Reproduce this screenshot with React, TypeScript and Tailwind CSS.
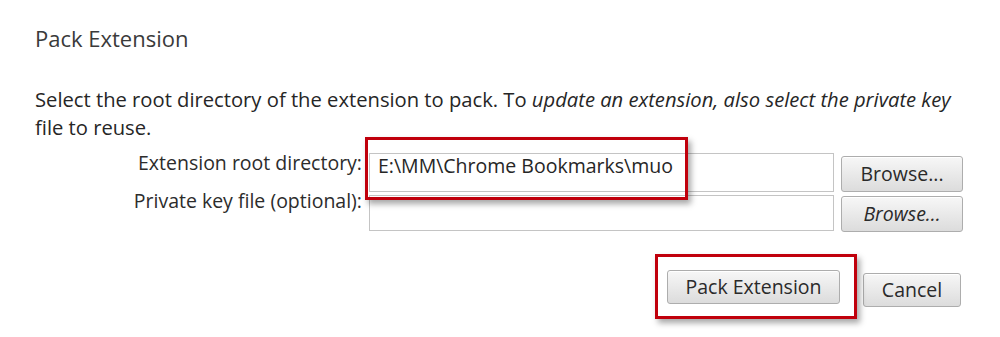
import React from 'react';

function Btn({ children, className = '' }: { children: React.ReactNode; className?: string }) {
  return (
    <button
      className={`flex items-center justify-center rounded-[3px] border border-[#adadad] bg-gradient-to-b from-[#f7f7f7] to-[#dcdcdc] text-[19.5px] leading-[20px] text-[#2a2a2a] shadow-[inset_0_1px_0_#ffffff] ${className}`}
    >
      {children}
    </button>
  );
}

export default function App() {
  return (
    <div className="relative h-[337px] w-[1000px] overflow-hidden bg-white font-['Open_Sans',sans-serif] text-[#303030]">
      <div className="pl-[35px] pt-[24px]">
        <h1 className="text-[22px] leading-[28px] text-[#3a3a3a]">Pack Extension</h1>
        <p className="mt-[34px] w-[940px] text-[20.2px] leading-[27.5px] text-[#262626]">
          Select the root directory of the extension to pack. To <i>update an extension, also select the private key</i> file to reuse.
        </p>
      </div>

      <div className="mt-[12px] grid grid-cols-[327px_465px_122px] gap-x-[7px] gap-y-[3px] pl-[35px]">
        <div className="flex items-start justify-end text-[19.5px] leading-[20px] text-[#2c2c2c]">Extension root directory:</div>
        <div className="flex h-[39px] items-start border border-[#c4c4c4] px-[8px] pt-[2px] text-[19.5px] leading-[20px] text-[#262626]">
          E:\MM\Chrome Bookmarks\muo
        </div>
        <Btn className="mt-[3px] h-[36px] w-[122px]">Browse...</Btn>

        <div className="-mt-[4px] flex items-start justify-end text-[19.5px] leading-[20px] text-[#2c2c2c]">
          Private key file (optional):
        </div>
        <div className="h-[36px] border border-[#c4c4c4]" />
        <Btn className="mt-[1px] h-[36px] w-[122px] italic">Browse...</Btn>
      </div>

      <div className="mt-[38px] flex items-start justify-end gap-[23px] pr-[39px]">
        <Btn className="h-[34px] w-[173px]">Pack Extension</Btn>
        <Btn className="mt-[3px] h-[34px] w-[98px]">Cancel</Btn>
      </div>

      {/* red annotation boxes */}
      <div className="absolute left-[365px] top-[137px] h-[63px] w-[323px] border-[3px] border-[#c0000c] shadow-[3px_4px_6px_rgba(0,0,0,0.35)]" />
      <div className="absolute left-[655px] top-[254px] h-[65px] w-[202px] border-[3px] border-[#c0000c] shadow-[3px_4px_6px_rgba(0,0,0,0.35)]" />
    </div>
  );
}
